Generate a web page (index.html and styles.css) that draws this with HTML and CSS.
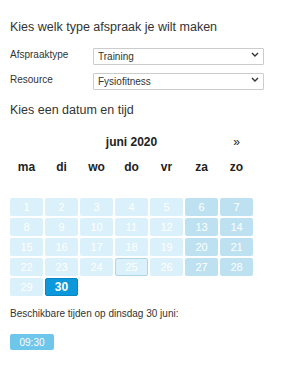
FILE: index.html
```html
<!DOCTYPE html>
<html lang="nl">
<head>
    <meta charset="UTF-8">
    <meta name="viewport" content="width=device-width, initial-scale=1.0">
    <title>Afspraak maken</title>
    <link rel="stylesheet" href="styles.css">
</head>
<body>
    <div class="page">
        <h2 class="title">Kies welk type afspraak je wilt maken</h2>

        <div class="form-row">
            <label class="form-label" for="type">Afspraaktype</label>
            <div class="select-wrap">
                <select id="type" class="select">
                    <option>Training</option>
                </select>
                <svg class="chevron" width="8" height="5" viewBox="0 0 8 5"><path d="M1 1l3 3 3-3" fill="none" stroke="#333" stroke-width="1.4"/></svg>
            </div>
        </div>
        <div class="form-row">
            <label class="form-label" for="resource">Resource</label>
            <div class="select-wrap">
                <select id="resource" class="select">
                    <option>Fysiofitness</option>
                </select>
                <svg class="chevron" width="8" height="5" viewBox="0 0 8 5"><path d="M1 1l3 3 3-3" fill="none" stroke="#333" stroke-width="1.4"/></svg>
            </div>
        </div>

        <h2 class="title title-date">Kies een datum en tijd</h2>

        <div class="calendar">
            <div class="cal-head">
                <span></span>
                <span class="cal-month">juni 2020</span>
                <span class="cal-next">&raquo;</span>
            </div>
            <div class="cal-days">
                <span>ma</span><span>di</span><span>wo</span><span>do</span><span>vr</span><span>za</span><span>zo</span>
            </div>
            <div class="cal-grid" id="grid"></div>
        </div>

        <p class="avail">Beschikbare tijden op dinsdag 30 juni:</p>
        <button class="time-btn">09:30</button>
    </div>

    <script>
        // juni 2020 begint op maandag
        const grid = document.getElementById("grid");
        for (let d = 1; d <= 30; d++) {
            const cell = document.createElement("span");
            cell.textContent = d;
            cell.className = "day";
            const dow = (d - 1) % 7;
            if (dow >= 5) cell.classList.add("weekend");
            if (d === 25) cell.classList.add("today");
            if (d === 30) cell.classList.add("selected");
            grid.appendChild(cell);
        }
    </script>
</body>
</html>
```

FILE: styles.css
```css
body {
    margin: 0;
    padding: 0;
    font-family: 'Liberation Sans', Arial, sans-serif;
    color: #333;
    background: #fff;
}

.page {
    padding: 19px 10px 0 10px;
}

.title {
    margin: 0;
    font-size: 12.5px;
    line-height: 16px;
    font-weight: normal;
    color: #333;
}

.form-row {
    display: flex;
    align-items: center;
    height: 17px;
    margin-top: 8px;
}

.title + .form-row {
    margin-top: 11px;
}

.form-label {
    width: 83px;
    font-size: 10px;
    color: #333;
}

.select-wrap {
    position: relative;
    width: 171px;
    height: 17px;
}

.select {
    appearance: none;
    -webkit-appearance: none;
    width: 100%;
    height: 100%;
    margin: 0;
    padding: 0 0 0 4px;
    border: 1px solid #ccc;
    border-radius: 1px;
    background: #fff;
    font-family: 'Liberation Sans', Arial, sans-serif;
    font-size: 10px;
    color: #333;
}

.chevron {
    position: absolute;
    right: 5px;
    top: 6px;
    pointer-events: none;
}

.title-date {
    margin-top: 14px;
}

.calendar {
    width: 245px;
    margin-top: 16px;
}

.cal-head,
.cal-days,
.cal-grid {
    display: grid;
    grid-template-columns: repeat(7, 33px);
    column-gap: 2px;
}

.cal-head {
    font-size: 12px;
    line-height: 16px;
    font-weight: bold;
    color: #222;
}

.cal-month {
    grid-column: 2 / span 5;
    text-align: center;
}

.cal-next {
    text-align: center;
    font-weight: normal;
}

.cal-days {
    margin-top: 9px;
    font-size: 12px;
    line-height: 16px;
    font-weight: bold;
    color: #222;
    text-align: center;
}

.cal-grid {
    margin-top: 23px;
    row-gap: 2px;
}

.day {
    height: 18px;
    line-height: 18px;
    text-align: center;
    font-size: 11px;
    color: #fff;
    background: #daf0fa;
    border-radius: 2px;
    box-sizing: border-box;
}

.day.weekend {
    background: #bde1f1;
}

.day.today {
    border: 1px solid #aed6e6;
    line-height: 16px;
}

.day.selected {
    background: #0b99dc;
    font-weight: bold;
    font-size: 12px;
    border: 1px solid #0a86c2;
    line-height: 16px;
}

.avail {
    margin: 11px 0 0 0;
    font-size: 10px;
    line-height: 13px;
    color: #333;
}

.time-btn {
    display: block;
    margin-top: 14px;
    width: 44px;
    height: 16px;
    padding: 0;
    border: none;
    border-radius: 2px;
    background: #6ec6ea;
    color: #fff;
    font-family: 'Liberation Sans', Arial, sans-serif;
    font-size: 10px;
}
```
